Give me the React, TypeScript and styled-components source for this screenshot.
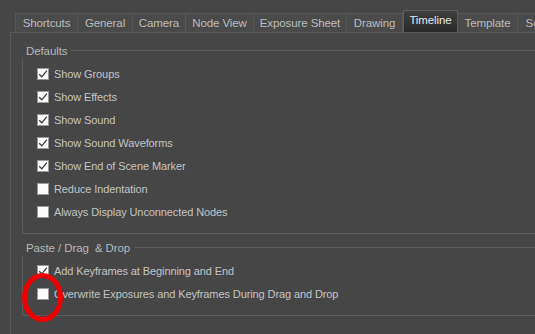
import styled, { createGlobalStyle } from 'styled-components';

const GlobalStyle = createGlobalStyle`
  html, body {
    margin: 0;
    background: #464646;
    overflow: hidden;
  }
  body {
    font-family: 'Liberation Sans', 'DejaVu Sans', sans-serif;
  }
`;

const TABS = [
  { label: 'Shortcuts', width: 63 },
  { label: 'General', width: 55 },
  { label: 'Camera', width: 53 },
  { label: 'Node View', width: 68 },
  { label: 'Exposure Sheet', width: 93 },
  { label: 'Drawing', width: 56 },
  { label: 'Timeline', width: 55, active: true },
  { label: 'Template', width: 60 },
  { label: 'Scripting', width: 60 }
];

const DEFAULTS = [
  { label: 'Show Groups', checked: true },
  { label: 'Show Effects', checked: true },
  { label: 'Show Sound', checked: true },
  { label: 'Show Sound Waveforms', checked: true },
  { label: 'Show End of Scene Marker', checked: true },
  { label: 'Reduce Indentation', checked: false },
  { label: 'Always Display Unconnected Nodes', checked: false }
];

const PASTE = [
  { label: 'Add Keyframes at Beginning and End', checked: true },
  {
    label: 'Overwrite Exposures and Keyframes During Drag and Drop',
    checked: false,
    marked: true
  }
];

type Option = { label: string; checked: boolean; marked?: boolean };

const CheckBox = ({ checked }: { checked: boolean }) => (
  <Box>
    {checked && (
      <svg width="10" height="10" viewBox="0 0 10 10">
        <path
          d="M1.2 5.2 L3.8 7.8 L8.9 1.6"
          fill="none"
          stroke="#3a3a3a"
          strokeWidth="1.3"
        />
      </svg>
    )}
  </Box>
);

const OptionGroup = ({ title, items }: { title: string; items: Option[] }) => (
  <Group>
    <GroupTitle>{title}</GroupTitle>
    {items.map((item) => (
      <Row key={item.label}>
        <CheckBox checked={item.checked} />
        <Label>{item.label}</Label>
        {item.marked && <Marker />}
      </Row>
    ))}
  </Group>
);

export default function App() {
  return (
    <>
      <GlobalStyle />
      <Page>
        <TabBar>
          {TABS.map((tab) => (
            <Tab key={tab.label} $active={!!tab.active} $width={tab.width}>
              {tab.label}
            </Tab>
          ))}
        </TabBar>
        <Panel>
          <OptionGroup title="Defaults" items={DEFAULTS} />
          <OptionGroup title="Paste / Drag  & Drop" items={PASTE} />
        </Panel>
      </Page>
    </>
  );
}

const Page = styled.div`
  width: 600px;
  height: 334px;
  padding: 11px 0 0 10px;
  box-sizing: border-box;
  display: flex;
  flex-direction: column;
`;

const TabBar = styled.div`
  display: flex;
  align-items: flex-end;
  height: 22px;
  padding-left: 5px;
  margin-bottom: -1px;
`;

const Tab = styled.div<{ $active: boolean; $width: number }>`
  flex: none;
  width: ${(p) => p.$width}px;
  box-sizing: border-box;
  height: ${(p) => (p.$active ? 23 : 20)}px;
  display: flex;
  align-items: center;
  justify-content: center;
  padding-bottom: ${(p) => (p.$active ? 3 : 0)}px;
  font-size: 11.5px;
  letter-spacing: -0.1px;
  white-space: nowrap;
  overflow: hidden;
  color: ${(p) => (p.$active ? '#e4e6ea' : '#bcbcbc')};
  background: ${(p) =>
    p.$active ? 'linear-gradient(#3e3e3e, #2a2a2a)' : '#4a4a4a'};
  border: 1px solid ${(p) => (p.$active ? '#5e5e5e' : '#565656')};
  border-bottom-color: ${(p) => (p.$active ? '#2a2a2a' : '#5a5a5a')};
  border-left-width: ${(p) => (p.$active ? 1 : 0)}px;
  border-radius: ${(p) => (p.$active ? '3px 3px 0 0' : '0')};
  &:first-child {
    border-left-width: 1px;
  }
`;

const Panel = styled.div`
  flex: 1;
  border-top: 1px solid #5a5a5a;
  border-left: 1px solid #5a5a5a;
  padding: 17px 0 0 11px;
  display: flex;
  flex-direction: column;
  gap: 13px;
`;

const Group = styled.div`
  position: relative;
  border: 1px solid #5c5c5c;
  border-right: none;
  border-radius: 3px 0 0 3px;
  padding: 11px 0 10px 14px;
  display: flex;
  flex-direction: column;
`;

const GroupTitle = styled.div`
  position: absolute;
  top: -8px;
  left: -2px;
  padding: 0 4px 0 5px;
  height: 16px;
  line-height: 16px;
  background: #464646;
  color: #b8b8b8;
  font-size: 11.5px;
  letter-spacing: -0.1px;
  white-space: pre;
`;

const Row = styled.div`
  position: relative;
  height: 23px;
  display: flex;
  align-items: center;
  gap: 5px;
`;

const Box = styled.span`
  flex: none;
  width: 12px;
  height: 12px;
  box-sizing: border-box;
  background: #fbfbfb;
  border: 1px solid #9a9a9a;
  display: flex;
  align-items: center;
  justify-content: center;
`;

const Label = styled.span`
  color: #c4c4c4;
  font-size: 11px;
  letter-spacing: -0.1px;
  white-space: nowrap;
`;

const Marker = styled.span`
  position: absolute;
  left: -15px;
  top: -9px;
  width: 41px;
  height: 49px;
  box-sizing: border-box;
  border: 5px solid #ee0000;
  border-radius: 50%;
`;
